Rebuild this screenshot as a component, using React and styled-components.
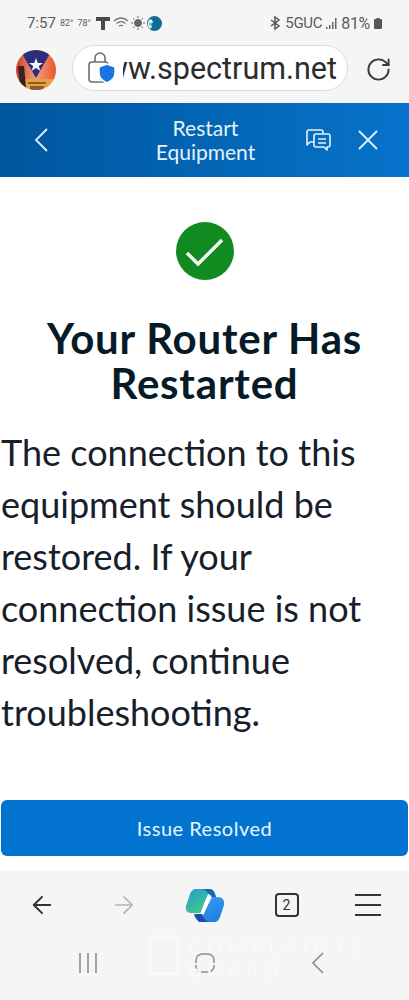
import React from 'react';
import styled, { createGlobalStyle } from 'styled-components';
import { ArrowLeft, ArrowRight, RotateCw } from 'lucide-react';

const GlobalStyle = createGlobalStyle`
  html, body { margin: 0; padding: 0; background: #f5f5f5; }
  * { box-sizing: border-box; }
`;

const Phone = styled.div`
  position: relative;
  width: 409px;
  height: 1000px;
  display: flex;
  flex-direction: column;
  overflow: hidden;
  background: #f5f5f5;
  font-family: "Lato", "Liberation Sans", sans-serif;
`;

const StatusBar = styled.div`
  height: 44px;
  padding: 2px 27px 0 27px;
  display: flex;
  align-items: center;
  justify-content: space-between;
  font-family: "Roboto", "Liberation Sans", sans-serif;
  color: #5c5c5c;
`;

const StatusGroup = styled.div`
  display: flex;
  align-items: center;
  gap: ${p => p.$gap || 4}px;
`;

const Clock = styled.span`
  font-size: 15px;
  margin-right: 2px;
`;

const Temp = styled.span`
  font-size: 9px;
  margin-right: 2px;
`;

const StatusText = styled.span`
  font-size: ${p => p.$size || 15}px;
  letter-spacing: -0.3px;
`;

const UrlRow = styled.div`
  height: 59px;
  padding: 1px 0 0 16px;
  display: flex;
  align-items: flex-start;
`;

const Avatar = styled.svg`
  width: 40px;
  height: 40px;
  margin-top: 5px;
  flex: none;
`;

const UrlPill = styled.div`
  width: 276px;
  height: 46px;
  margin-left: 16px;
  padding-left: 14px;
  display: flex;
  align-items: center;
  background: #fff;
  border: 1px solid #dcdcdc;
  border-radius: 23px;
  overflow: hidden;
`;

const UrlText = styled.span`
  width: 214px;
  margin-left: 6px;
  overflow: hidden;
  display: flex;
  justify-content: flex-end;
  white-space: nowrap;
  font-family: "Roboto", "Liberation Sans", sans-serif;
  font-size: 30.5px;
  color: #2c2c2c;
`;

const Reload = styled.div`
  margin: 11px 0 0 17px;
  color: #3a3a3a;
  display: flex;
`;

const Header = styled.header`
  height: 74px;
  padding: 0 31px 0 34px;
  display: flex;
  align-items: center;
  color: #e6f1fb;
  background: linear-gradient(90deg, #00569e 0%, #0368b8 60%, #0873cc 100%);
`;

const HeaderTitle = styled.div`
  flex: 1;
  padding-left: 58px;
  text-align: center;
  font-size: 21px;
  line-height: 24px;
  font-weight: 400;
`;

const HeaderActions = styled.div`
  display: flex;
  align-items: center;
  gap: 27px;
`;

const Content = styled.main`
  height: 694px;
  background: #fff;
  display: flex;
  flex-direction: column;
  align-items: stretch;
  padding: 45px 1px 15px 1px;
`;

const SuccessIcon = styled.svg`
  width: 58px;
  height: 58px;
  align-self: center;
  flex: none;
  margin-left: 1px;
`;

const Title = styled.h1`
  margin: 36px 0 0;
  text-align: center;
  font-size: 42px;
  line-height: 45px;
  font-weight: 700;
  letter-spacing: 0.8px;
  color: #061a27;
`;

const Message = styled.p`
  margin: 20px 0 0;
  font-size: 36px;
  line-height: 52px;
  font-weight: 400;
  color: #17202a;
`;

const PrimaryButton = styled.button`
  margin-top: auto;
  height: 56px;
  width: 100%;
  border: 0;
  border-radius: 6px;
  background: #0274d0;
  color: #e9f4fd;
  font-family: inherit;
  font-size: 20px;
  letter-spacing: 0.5px;
`;

const BottomNav = styled.nav`
  height: 72px;
  padding: 0 26px 4px 27px;
  display: flex;
  align-items: center;
  justify-content: space-between;
  color: #333;
`;

const NavSlot = styled.div`
  width: 30px;
  display: flex;
  justify-content: center;
  color: ${p => (p.$muted ? '#b5b5b5' : 'inherit')};
`;

const TabCount = styled.div`
  width: 24px;
  height: 24px;
  border: 2px solid #333;
  border-radius: 4px;
  display: flex;
  align-items: center;
  justify-content: center;
  font-family: "Roboto", sans-serif;
  font-size: 14px;
`;

const Menu = styled.div`
  display: flex;
  flex-direction: column;
  gap: 8px;
  width: 26px;
  flex: none;
`;

const MenuLine = styled.span`
  height: 2px;
  background: #333;
`;

const SystemBar = styled.div`
  height: 50px;
  padding: 0 85px 10px 79px;
  display: flex;
  align-items: center;
  justify-content: space-between;
  color: #8f8f8f;
`;

const Watermark = styled.div`
  position: absolute;
  left: 149px;
  top: 935px;
  display: flex;
  gap: 10px;
  color: #f9f9f9;
  font-size: 20px;
  line-height: 23px;
  letter-spacing: 5px;
`;

const WatermarkMark = styled.div`
  width: 30px;
  height: 40px;
  border: 3px solid #f9f9f9;
  border-radius: 6px;
`;

export default function App() {
  return (
    <>
      <GlobalStyle />
      <Phone>
        <StatusBar>
          <StatusGroup $gap={2}>
            <Clock>7:57</Clock>
            <Temp>82°</Temp>
            <Temp>78°</Temp>
            <svg width="16" height="16" viewBox="0 0 16 16" fill="#4a4a4a">
              <path d="M1 2h14v4H10v9H6V6H1z" />
            </svg>
            <svg width="16" height="14" viewBox="0 0 16 14" fill="none" stroke="#777" strokeWidth="1.3">
              <path d="M1 5c4-4 10-4 14 0M3.500 7.500c3-2.500 6-2.500 9 0M6 10c1.500-1 2.500-1 4 0" />
            </svg>
            <svg width="14" height="14" viewBox="0 0 14 14" fill="#666" stroke="#666" strokeWidth="1">
              <circle cx="7" cy="7" r="3.500" />
              <path d="M7 0v2M7 12v2M0 7h2M12 7h2M2 2l1.500 1.500M10.500 10.500L12 12M2 12l1.500-1.500M10.500 3.500L12 2" />
            </svg>
            <svg width="15" height="15" viewBox="0 0 15 15">
              <circle cx="7.500" cy="7.500" r="7.500" fill="#0f6c97" />
              <path d="M3 3c-3 3-3 7 0 10l2-2-1-2 2-3-1-2z" fill="#f5f5f5" />
              <circle cx="3.500" cy="8" r="1.500" fill="#37c0a0" />
            </svg>
          </StatusGroup>
          <StatusGroup $gap={4}>
            <svg width="12" height="14" viewBox="0 0 12 14" fill="none" stroke="#555" strokeWidth="1.500">
              <path d="M2 4l8 6-4 3V1l4 3-8 6" />
            </svg>
            <StatusText>5GUC</StatusText>
            <svg width="11" height="11" viewBox="0 0 11 11" fill="#666">
              <path d="M0 9h1.500v2H0zM3 7h1.500v4H3zM6 4h1.500v7H6zM9 0h1.500v11H9z" />
            </svg>
            <StatusText $size={16}>81%</StatusText>
            <svg width="8" height="11" viewBox="0 0 8 11" fill="#555">
              <path d="M2.500 0h3v1H7a1 1 0 011 1v8a1 1 0 01-1 1H1a1 1 0 01-1-1V2a1 1 0 011-1h1.500z" />
            </svg>
          </StatusGroup>
        </StatusBar>

        <UrlRow>
          <Avatar viewBox="0 0 40 40">
            <defs>
              <clipPath id="flag"><circle cx="20" cy="20" r="20" /></clipPath>
              <linearGradient id="flagBg" x1="0" y1="0" x2="1" y2="0">
                <stop offset="0" stopColor="#c8402c" />
                <stop offset="0.5" stopColor="#f0a080" />
                <stop offset="1" stopColor="#e8552a" />
              </linearGradient>
            </defs>
            <g clipPath="url(#flag)">
              <rect width="40" height="40" fill="url(#flagBg)" />
              <rect y="29" width="40" height="11" fill="#e6a23c" />
              <path d="M4 0h32L20 28z" fill="#2c2e7c" />
              <path d="M20 8l1.800 5h5.200l-4.200 3 1.600 5-4.400-3-4.400 3 1.600-5-4.200-3h5.200z" fill="#f4f4fa" />
              <path d="M2 16h6l2 22H4z" fill="#3a2220" />
              <path d="M12 32h18v2H12zM14 36h14v4H14z" fill="#8a5a3a" />
            </g>
          </Avatar>
          <UrlPill>
            <svg width="30" height="34" viewBox="0 0 30 34" fill="none" style={{ flex: 'none' }}>
              <path d="M8 11V7a5 5 0 0110 0v4" stroke="#6f6f6f" strokeWidth="1.600" />
              <rect x="2" y="11" width="19" height="20" rx="3" stroke="#6f6f6f" strokeWidth="1.600" />
              <path d="M20 13l8 3v6c0 5-3.500 8-8 10-4.500-2-8-5-8-10v-6z" fill="#1a73e0" stroke="#fff" strokeWidth="1.500" />
            </svg>
            <UrlText>www.spectrum.net</UrlText>
          </UrlPill>
          <Reload>
            <RotateCw size={27} strokeWidth={1.700} />
          </Reload>
        </UrlRow>

        <Header>
          <svg width="14" height="24" viewBox="0 0 14 24" fill="none" stroke="currentColor" strokeWidth="1.800" style={{ flex: 'none' }}>
            <path d="M13 1L2 12l11 11" />
          </svg>
          <HeaderTitle>Restart<br />Equipment</HeaderTitle>
          <HeaderActions>
            <svg width="26" height="24" viewBox="0 0 26 24" fill="none" stroke="currentColor" strokeWidth="1.600" strokeLinejoin="round">
              <path d="M9 14H5l-3 3v-3.500V4a2 2 0 012-2h12a2 2 0 012 2v2" />
              <path d="M11 6h12a2 2 0 012 2v9a2 2 0 01-2 2h-1v3l-3-3h-8a2 2 0 01-2-2V8a2 2 0 012-2z" />
              <path d="M13 11h8M13 15h8" />
            </svg>
            <svg width="20" height="20" viewBox="0 0 20 20" fill="none" stroke="currentColor" strokeWidth="1.800">
              <path d="M1 1l18 18M19 1L1 19" />
            </svg>
          </HeaderActions>
        </Header>

        <Content>
          <SuccessIcon viewBox="0 0 58 58">
            <circle cx="29" cy="29" r="29" fill="#118a1f" />
            <path d="M11 31l11 11 24-24" fill="none" stroke="#f4fbf4" strokeWidth="3.500" />
          </SuccessIcon>
          <Title>Your Router Has<br />Restarted</Title>
          <Message>
            The connection to this equipment should be restored. If your connection issue is not resolved, continue troubleshooting.
          </Message>
          <PrimaryButton>Issue Resolved</PrimaryButton>
        </Content>

        <BottomNav>
          <NavSlot><ArrowLeft size={28} strokeWidth={1.700} /></NavSlot>
          <NavSlot $muted><ArrowRight size={28} strokeWidth={1.400} /></NavSlot>
          <NavSlot>
            <svg width="40" height="35" viewBox="0 0 40 35" style={{ flex: 'none' }}>
              <defs>
                <linearGradient id="copA" x1="0" y1="0" x2="0.6" y2="1">
                  <stop offset="0" stopColor="#1f9fd8" />
                  <stop offset="1" stopColor="#45c58a" />
                </linearGradient>
                <linearGradient id="copB" x1="0" y1="0" x2="0.6" y2="1">
                  <stop offset="0" stopColor="#3ba0f2" />
                  <stop offset="1" stopColor="#1e7fe0" />
                </linearGradient>
              </defs>
              <path d="M11 1h14L16 25H6c-4 0-6-3-5-7l4-12c1-3 3-5 6-5z" fill="url(#copA)" />
              <path d="M17 1h8c3 0 5 3 6 8h-6c-1-4-4-7-8-8z" fill="#0f6aa8" />
              <path d="M27 9h6c4 0 7 3 6 8l-4 12c-1 3-3 5-6 5H13l8-13z" fill="url(#copB)" />
              <path d="M9 26h8c1 3 3 7 7 8h-8c-3 0-6-4-7-8z" fill="#1a4fb0" />
              <path d="M25 7c-3 5-5 12-8 19" stroke="#fff" strokeWidth="3.500" fill="none" />
            </svg>
          </NavSlot>
          <NavSlot><TabCount>2</TabCount></NavSlot>
          <NavSlot>
            <Menu><MenuLine /><MenuLine /><MenuLine /></Menu>
          </NavSlot>
        </BottomNav>

        <SystemBar>
          <svg width="18" height="20" viewBox="0 0 18 20" fill="none" stroke="currentColor" strokeWidth="1.600">
            <path d="M1 0v20M9 0v20M17 0v20" />
          </svg>
          <svg width="20" height="20" viewBox="0 0 20 20" fill="none" stroke="currentColor" strokeWidth="1.500">
            <rect x="1" y="1" width="18" height="18" rx="6" />
          </svg>
          <svg width="12" height="22" viewBox="0 0 12 22" fill="none" stroke="currentColor" strokeWidth="1.600">
            <path d="M11 1L1 11l10 10" />
          </svg>
        </SystemBar>

        <Watermark>
          <WatermarkMark />
          <span>COMPLAINTS<br />BOARD</span>
        </Watermark>
      </Phone>
    </>
  );
}
